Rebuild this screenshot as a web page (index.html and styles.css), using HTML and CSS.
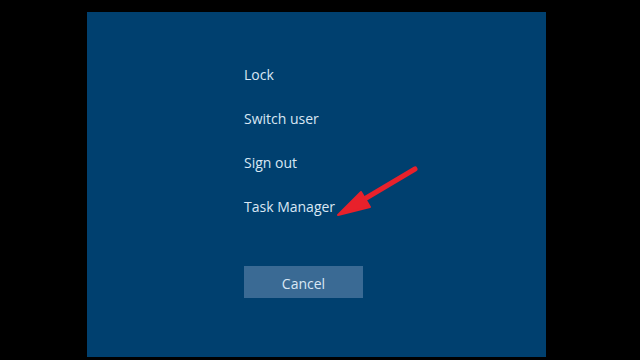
FILE: index.html
```html
<!DOCTYPE html>
<html>
<head>
<meta charset="utf-8">
<link rel="stylesheet" href="styles.css">
</head>
<body>
<div class="screen">
  <div class="panel">
    <ul class="menu">
      <li>Lock</li>
      <li>Switch user</li>
      <li>Sign out</li>
      <li>Task Manager</li>
    </ul>
    <div class="cancel">Cancel</div>
    <svg class="arrow" width="100" height="70" viewBox="0 0 100 70">
      <line x1="80" y1="9" x2="16" y2="47" stroke="#e8212b" stroke-width="5" stroke-linecap="round"/>
      <polygon points="3,55 26,32 35,47" fill="#e8212b" stroke="#e8212b" stroke-width="2" stroke-linejoin="round"/>
    </svg>
  </div>
</div>
</body>
</html>
```
FILE: styles.css
```css
html, body {
  margin: 0;
  padding: 0;
  background: #000;
}
.screen {
  width: 640px;
  height: 360px;
  padding: 12px 0 0 87px;
  box-sizing: border-box;
}
.panel {
  position: relative;
  width: 459px;
  height: 345px;
  background: #00406f;
  padding: 41px 0 0 157px;
  box-sizing: border-box;
  font-family: "Open Sans", "Noto Sans", sans-serif;
  color: #d9e7f4;
}
.menu {
  list-style: none;
  margin: 0;
  padding: 0;
}
.menu li {
  height: 44px;
  line-height: 44px;
  font-size: 14px;
}
.cancel {
  margin-top: 37px;
  width: 119px;
  height: 32px;
  line-height: 35px;
  background: #3a6a94;
  text-align: center;
  font-size: 14px;
}
.arrow {
  position: absolute;
  left: 248px;
  top: 148px;
}
```
